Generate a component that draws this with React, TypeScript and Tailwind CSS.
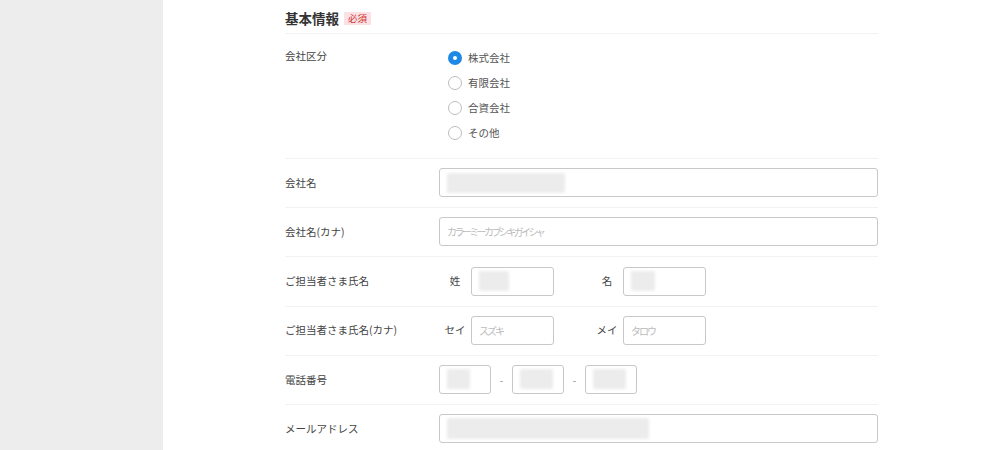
import React from "react";

const font = { fontFamily: '"Noto Sans CJK JP", "Noto Sans", sans-serif' };

function Blur({ w, h = 20 }: { w: number; h?: number }) {
  return <div className="rounded-[2px] bg-[#ececec] blur-[1.5px]" style={{ width: w, height: h }} />;
}

function Box({ className = "", children }: { className?: string; children?: React.ReactNode }) {
  return (
    <div className={`flex h-[29px] items-center rounded-[3px] border border-[#c8c8c8] bg-white px-[7px] ${className}`}>
      {children}
    </div>
  );
}

function Row({ label, children, top = false }: { label: string; children: React.ReactNode; top?: boolean }) {
  return (
    <div className={`flex border-b border-[#f2f2f2] ${top ? "items-start pt-[14px] pb-[13px]" : "items-center pt-[9.2px] pb-[10px]"}`}>
      <div className="w-[154px] shrink-0 text-[10.5px] text-[#444]">{label}</div>
      <div className="flex-1">{children}</div>
    </div>
  );
}

function Radio({ checked, label }: { checked?: boolean; label: string }) {
  return (
    <div className="flex h-[25px] items-center pl-[9px]">
      {checked ? (
        <span className="flex h-[14px] w-[14px] items-center justify-center rounded-full bg-[#1e88e5]">
          <span className="h-[4px] w-[4px] rounded-full bg-white" />
        </span>
      ) : (
        <span className="h-[14px] w-[14px] rounded-full border border-[#bdbdbd] bg-white" />
      )}
      <span className="ml-[6px] text-[10.5px] text-[#555]">{label}</span>
    </div>
  );
}

function Ph({ children, t = "-2px" }: { children: React.ReactNode; t?: string }) {
  return (
    <span className="text-[10px] text-[#bbb]" style={{ letterSpacing: t }}>
      {children}
    </span>
  );
}

export default function App() {
  return (
    <div className="flex h-[450px] w-full overflow-hidden bg-white" style={font}>
      <div className="w-[163px] shrink-0 bg-[#ededed]" />
      <div className="flex-1">
        <div className="mx-auto w-[593px]">
          <div className="flex h-[34px] items-center border-b border-[#f2f2f2] pt-[3px]">
            <span className="text-[13.5px] font-bold text-[#333]">基本情報</span>
            <span className="ml-[5px] rounded-[1px] bg-[#fbe1e3] px-[4px] text-[9.5px] leading-[13px] text-[#c33]">必須</span>
          </div>
          <Row label="会社区分" top>
            <div className="-mt-[3px]">
              <Radio checked label="株式会社" />
              <Radio label="有限会社" />
              <Radio label="合資会社" />
              <Radio label="その他" />
            </div>
          </Row>
          <Row label="会社名">
            <Box>
              <Blur w={118} />
            </Box>
          </Row>
          <Row label="会社名(カナ)">
            <Box>
              <Ph t="-2.6px">カラーミーカブシキガイシャ</Ph>
            </Box>
          </Row>
          <Row label="ご担当者さま氏名">
            <div className="flex items-center">
              <span className="w-[32px] text-center text-[10.5px] text-[#444]">姓</span>
              <Box className="w-[83px]">
                <Blur w={30} />
              </Box>
              <span className="ml-[37px] w-[32px] text-center text-[10.5px] text-[#444]">名</span>
              <Box className="w-[83px]">
                <Blur w={24} />
              </Box>
            </div>
          </Row>
          <Row label="ご担当者さま氏名(カナ)">
            <div className="flex items-center">
              <span className="w-[32px] text-center text-[10.5px] text-[#444]">セイ</span>
              <Box className="w-[83px]">
                <Ph>スズキ</Ph>
              </Box>
              <span className="ml-[37px] w-[32px] text-center text-[10.5px] text-[#444]">メイ</span>
              <Box className="w-[83px]">
                <Ph>タロウ</Ph>
              </Box>
            </div>
          </Row>
          <Row label="電話番号">
            <div className="flex items-center">
              <Box className="w-[52px]">
                <Blur w={23} />
              </Box>
              <span className="w-[21px] text-center text-[10px] text-[#888]">-</span>
              <Box className="w-[52px]">
                <Blur w={33} />
              </Box>
              <span className="w-[21px] text-center text-[10px] text-[#888]">-</span>
              <Box className="w-[52px]">
                <Blur w={33} />
              </Box>
            </div>
          </Row>
          <Row label="メールアドレス">
            <Box>
              <Blur w={202} h={21} />
            </Box>
          </Row>
        </div>
      </div>
    </div>
  );
}
